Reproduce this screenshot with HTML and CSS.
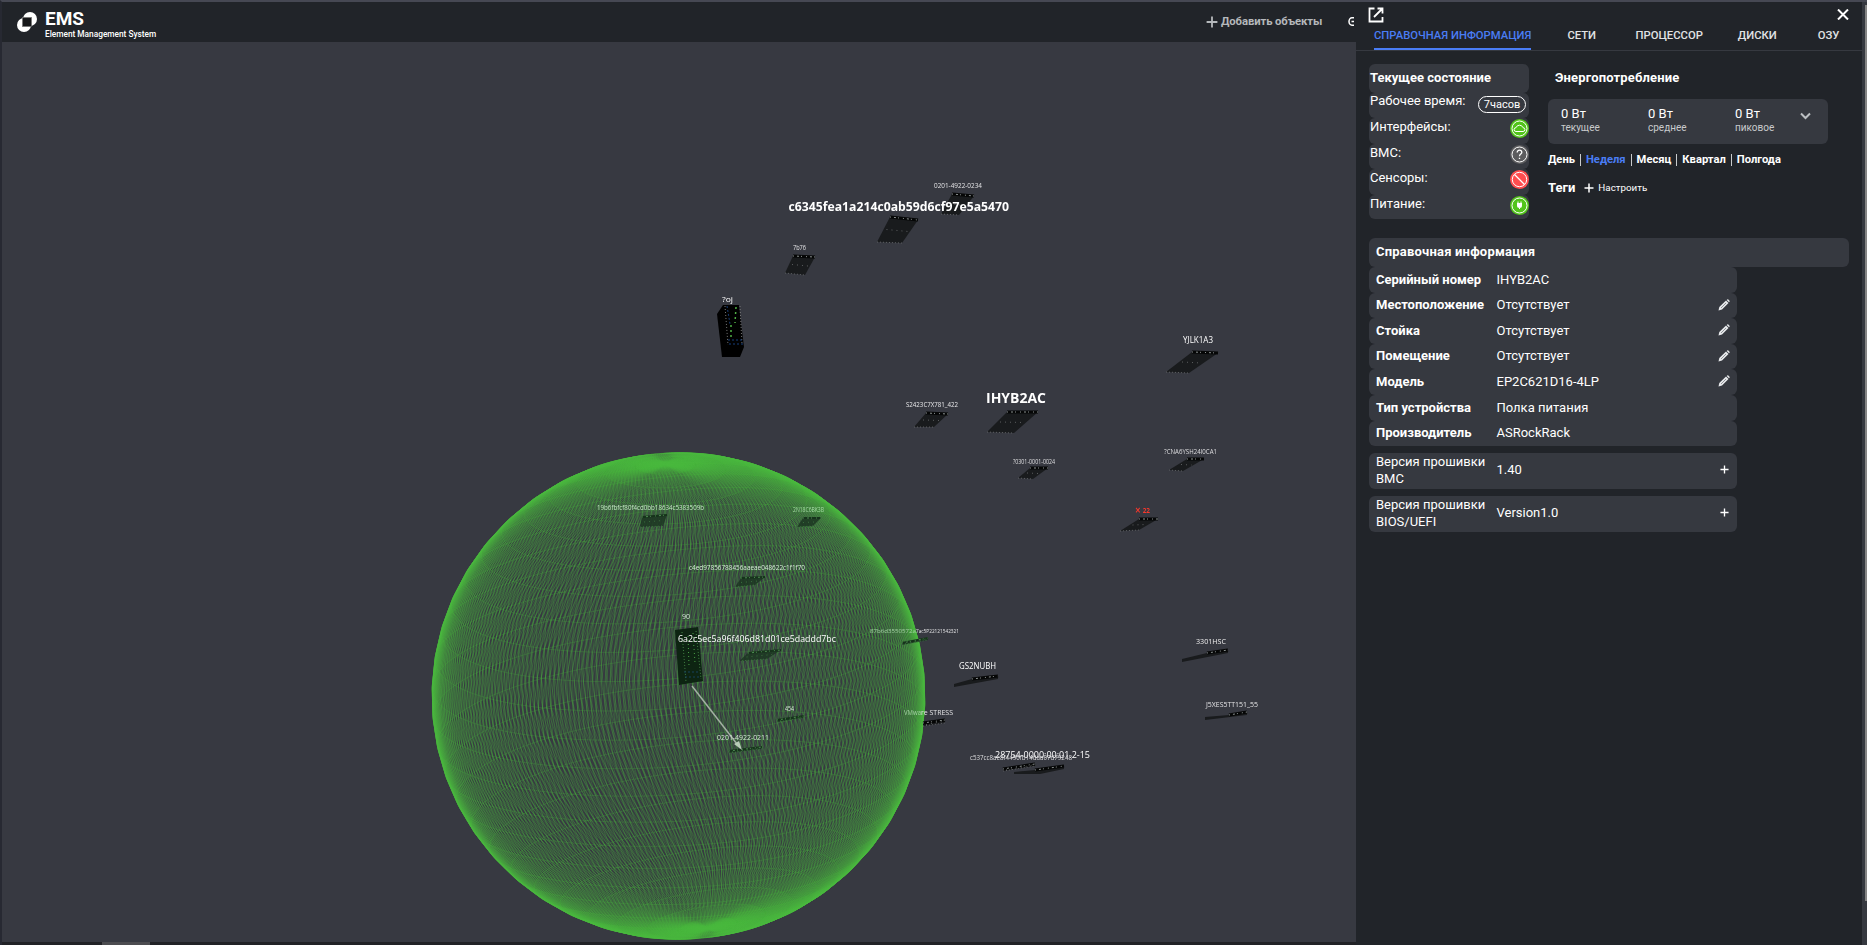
FILE: index.html
```html
<!DOCTYPE html>
<html lang="ru">
<head>
<meta charset="utf-8">
<title>EMS</title>
<link rel="stylesheet" href="styles.css">
</head>
<body>
<svg class="defs" width="0" height="0">
  <symbol id="pencil" viewBox="0 0 12 12"><path d="M.5 11.500l.8-3.400L8 1.500l2.500 2.500L4 10.600z" fill="#e8eaec"/><path d="M8.700 1l.6-.5c.3-.3.7-.3 1 0l1.200 1.200c.3.300.3.700 0 1l-.5.600z" fill="#e8eaec"/><path d="M3 9l5-5" stroke="#6b6f75" stroke-width=".7"/></symbol>
  <symbol id="plus" viewBox="0 0 10 10"><path d="M5 .5v9M.5 5h9" stroke="currentColor" stroke-width="1.500"/></symbol>
</svg>
<div class="app">
  <main class="main">
    <header class="header">
      <svg class="logo" width="20" height="20" viewBox="0 0 20 20"><circle cx="13" cy="7" r="7" fill="#fff"/><circle cx="7" cy="13" r="7" fill="#fff"/><rect x="5.500" y="5.500" width="9" height="9" fill="#17181a" stroke="#777" stroke-width=".8"/></svg>
      <div class="brand"><b class="brand-name">EMS</b><span class="brand-sub">Element Management System</span></div>
      <div class="add"><svg width="12" height="12"><use href="#plus"/></svg><span>Добавить объекты</span></div>
      <svg class="more" width="6" height="9" viewBox="0 0 6 9" fill="none" stroke="#fff" stroke-width="1.500"><path d="M6 .8H4a3 3.700 0 0 0 0 7.400h2M3.500 4.500H6"/></svg>
    </header>
    <div class="scene">
      <canvas id="sphere" class="sphere" width="1354" height="900"></canvas>
      <svg class="objects" id="objects" width="1354" height="900" viewBox="2 42 1354 900"></svg>
    </div>
    <footer class="hscroll"><i class="hthumb"></i></footer>
  </main>
  <aside class="panel">
    <div class="panel-top">
      <svg width="16" height="16" viewBox="0 0 16 16" fill="none" stroke="#fff" stroke-width="1.800"><path d="M6.500 1.500H1.500v13h13V10M9.500 1.500h5v5M14 2L6 10"/></svg>
      <svg class="close" width="12" height="11" viewBox="0 0 12 11" stroke="#fff" stroke-width="2"><path d="M1 .5l10 10M11 .5l-10 10"/></svg>
    </div>
    <nav class="tabs"><span class="tab active">СПРАВОЧНАЯ ИНФОРМАЦИЯ</span><span class="tab">СЕТИ</span><span class="tab">ПРОЦЕССОР</span><span class="tab">ДИСКИ</span><span class="tab">ОЗУ</span></nav>
    <div class="top">
      <section class="state">
        <h2 class="state-title">Текущее состояние</h2>
        <div class="srow first"><span>Рабочее время:</span><em class="pill">7часов</em></div>
        <div class="srow"><span>Интерфейсы:</span><svg width="19" height="19" viewBox="0 0 19 19"><circle cx="9.500" cy="9.500" r="9.500" fill="#52c41a"/><circle cx="9.500" cy="9.500" r="7.500" fill="none" stroke="#fff"/><path d="M6 12.500a1.900 1.900 0 0 1 0-3.800 3.700 3.700 0 0 1 7 0 1.900 1.900 0 0 1 0 3.800z" fill="none" stroke="#fff"/></svg></div>
        <div class="srow"><span>BMC:</span><svg width="19" height="19" viewBox="0 0 19 19"><circle cx="9.500" cy="9.500" r="9.500" fill="#5c5c5e"/><circle cx="9.500" cy="9.500" r="7.500" fill="none" stroke="#fff"/><path d="M7.200 7.500c0-3.200 4.800-3 4.600 0-.1 1.600-2.300 1.700-2.300 3.700M9.500 12.700v1.400" fill="none" stroke="#fff" stroke-width="1.300"/></svg></div>
        <div class="srow"><span>Сенсоры:</span><svg width="19" height="19" viewBox="0 0 19 19"><circle cx="9.500" cy="9.500" r="9.500" fill="#ff4d4f"/><circle cx="9.500" cy="9.500" r="7.200" fill="none" stroke="#fff"/><path d="M4.500 4.500l10 10" stroke="#fff" stroke-width="1.200"/></svg></div>
        <div class="srow last"><span>Питание:</span><svg width="19" height="19" viewBox="0 0 19 19"><circle cx="9.500" cy="9.500" r="9.500" fill="#52c41a"/><circle cx="9.500" cy="9.500" r="7.500" fill="none" stroke="#fff"/><path d="M7 7h5v2.500a2.500 2.500 0 0 1-5 0zM7.500 5.500h1V7h-1zM10.500 5.500h1V7h-1zM9 11h1v2H9z" fill="#fff"/></svg></div>
      </section>
      <section class="power">
        <h2 class="power-title">Энергопотребление</h2>
        <div class="meter">
          <div class="m"><span>0 Вт</span><small>текущее</small></div><div class="m"><span>0 Вт</span><small>среднее</small></div><div class="m"><span>0 Вт</span><small>пиковое</small></div>
          <svg class="chev" width="11" height="8" viewBox="0 0 11 8" fill="none" stroke="#bcbfc2" stroke-width="2"><path d="M1 1.500l4.500 4.500L10 1.500"/></svg>
        </div>
        <div class="periods"><b>День</b><i></i><b class="on">Неделя</b><i></i><b>Месяц</b><i></i><b>Квартал</b><i></i><b>Полгода</b></div>
        <div class="tags"><b>Теги</b><svg width="10" height="10"><use href="#plus"/></svg><span>Настроить</span></div>
      </section>
    </div>
    <section class="info">
      <h2 class="info-title">Справочная информация</h2>
      <div class="row"><b>Серийный номер</b><span>IHYB2AC</span></div>
      <div class="row"><b>Местоположение</b><span>Отсутствует</span><svg width="12" height="12"><use href="#pencil"/></svg></div>
      <div class="row"><b>Стойка</b><span>Отсутствует</span><svg width="12" height="12"><use href="#pencil"/></svg></div>
      <div class="row"><b>Помещение</b><span>Отсутствует</span><svg width="12" height="12"><use href="#pencil"/></svg></div>
      <div class="row"><b>Модель</b><span>EP2C621D16-4LP</span><svg width="12" height="12"><use href="#pencil"/></svg></div>
      <div class="row"><b>Тип устройства</b><span>Полка питания</span></div>
      <div class="row"><b>Производитель</b><span>ASRockRack</span></div>
      <div class="row fw"><p>Версия прошивки BMC</p><span>1.40</span><svg class="exp" width="9" height="9"><use href="#plus"/></svg></div>
      <div class="row fw"><p>Версия прошивки BIOS/UEFI</p><span>Version1.0</span><svg class="exp" width="9" height="9"><use href="#plus"/></svg></div>
    </section>
  </aside>
  <div class="vscroll"><i class="vthumb"></i></div>
</div>
<script src="scene.js"></script>
</body>
</html>
```
FILE: styles.css
```css
* { box-sizing: border-box; }
body { margin: 0; width: 1867px; height: 945px; overflow: hidden; background: #212429; color: #fff; font: 13px/17px Roboto, "Noto Sans", sans-serif; }
h2, p { margin: 0; font-size: 13px; line-height: 17px; }
.defs { position: absolute; }
.app { display: flex; height: 945px; border-top: 2px solid #464853; border-left: 2px solid #272932; }
.main { width: 1354px; flex: none; display: flex; flex-direction: column; }
.header { height: 40px; flex: none; display: flex; align-items: flex-start; background: #212429; overflow: hidden; white-space: nowrap; }
.logo { margin: 10px 0 0 15px; }
.brand { display: flex; flex-direction: column; margin: 8px 0 0 8px; width: 1161px; flex: none; }
.brand-name { font-size: 19px; line-height: 18px; }
.brand-sub { font-size: 8.300px; line-height: 10px; margin-top: 1px; font-weight: 500; }
.add { display: flex; gap: 3px; align-items: center; margin-top: 11px; color: #b5b8bb; font-weight: 700; font-size: 11.300px; width: 141px; letter-spacing: -.1px; flex: none; }
.more { margin: 15px 0 0 1px; flex: none; }
.scene { position: relative; height: 900px; background: #373941; overflow: hidden; }
.sphere, .objects { position: absolute; left: 0; top: 0; }
.objects text { font-family: "Open Sans", "Noto Sans", sans-serif; }
.hscroll { flex: 1; background: #212226; padding-left: 100px; }
.hthumb { display: block; width: 48px; height: 3px; background: #4c4c50; }
.panel { width: 506px; flex: none; background: #212429; }
.panel-top { height: 21px; display: flex; justify-content: space-between; padding: 5px 13px 0 12px; }
.close { margin-top: 2px; }
.tabs { height: 28px; display: flex; padding-left: 18px; border-bottom: 1px solid #363940; font-size: 11.250px; font-weight: 500; color: #e1e3e5; white-space: nowrap; }
.tab { height: 27px; line-height: 25px; margin-right: 36px; }
.tab:nth-child(2) { margin-right: 39.500px; }
.tab:nth-child(3) { margin-right: 35px; }
.tab:nth-child(4) { margin-right: 41px; }
.tab.active { color: #4a7df5; border-bottom: 2px solid #4a7df5; }
.top { display: flex; padding: 13px 0 0 13px; height: 187px; gap: 19px; }
.state { width: 160px; }
.state-title { height: 28.500px; background: #363940; border-radius: 6px; padding: 5px 1px; }
.srow { height: 25.500px; background: #363940; border-radius: 6px; display: flex; justify-content: space-between; padding-left: 1px; line-height: 18px; }
.srow.first { line-height: 16px; }
.srow.last { height: 24px; }
.srow svg { margin-top: 1px; flex: none; }
.pill { font-style: normal; font-size: 11px; line-height: 15px; height: 17px; width: 48px; border: 1px solid #fff; border-radius: 9px; text-align: center; margin: 3px 3px 0 0; }
.power-title { padding: 5px 0 0 7px; letter-spacing: .15px; }
.meter { display: flex; width: 280px; height: 45px; margin-top: 13px; border-radius: 6px; background: #363940; padding: 6px 0 0 13px; }
.m { width: 87px; display: flex; flex-direction: column; }
.m + .m + .m { width: 65px; }
.m small { font-size: 10px; line-height: 12px; color: #c8cacc; }
.chev { margin-top: 7px; }
.periods { display: flex; align-items: center; height: 17px; margin-top: 7px; font-size: 11.200px; gap: 5px; white-space: nowrap; }
.periods i { width: 1px; height: 12px; background: #c9cbcd; }
.periods .on { color: #4a7df5; }
.tags { display: flex; align-items: center; margin-top: 11px; gap: 4px; font-size: 9.800px; }
.tags b { font-size: 13px; margin-right: 5px; }
.info { padding-left: 13px; }
.info-title { width: 480px; height: 29px; border-radius: 6px; background: #363940; padding: 5px 7px; letter-spacing: .2px; }
.row { width: 368px; height: 25.600px; border-radius: 6px; background: #363940; padding: 0 7px 1.500px; display: flex; align-items: center; }
.row b, .row p { width: 120.500px; flex: none; white-space: nowrap; }
.row p { width: 115px; margin-right: 5.500px; white-space: normal; }
.row span { flex: 1; }
.fw { height: 36.300px; margin-top: 6.600px; padding-bottom: 2.500px; }
.exp { margin-right: 1px; }
.vscroll { width: 5px; background: #363940; padding-left: 3px; }
.vthumb { display: block; width: 2px; height: 896px; margin-top: 3px; background: #858585; }
```
FILE: scene.js
```js
// Wireframe coverage sphere, drawn in page coordinates.
const ctx = document.getElementById('sphere').getContext('2d');
ctx.translate(-2, -42);
const CX = 678.5, CY = 696, RX = 246.5, RY = 243.5;
const LAT = 26, LON = 300, tilt = 0.29, roll = 0.09;
function project(theta, phi) {
  const x = Math.sin(theta) * Math.cos(phi), y = Math.cos(theta), z = Math.sin(theta) * Math.sin(phi);
  const y1 = y * Math.cos(tilt) - z * Math.sin(tilt);
  const x2 = x * Math.cos(roll) - y1 * Math.sin(roll);
  const y2 = x * Math.sin(roll) + y1 * Math.cos(roll);
  const lean = 110 * y2 * y2 * (1 - x2 * x2 - y2 * y2);
  return [CX + x2 * RX + lean, CY - y2 * RY];
}
ctx.lineWidth = 0.8;
ctx.strokeStyle = 'rgba(74,184,62,0.34)';
for (let j = 0; j < LON; j++) {
  const a = j / LON * 2 * Math.PI, b = (j + 1) / LON * 2 * Math.PI;
  ctx.beginPath();
  for (let i = 0; i <= LAT; i++) ctx.lineTo(...project(i / LAT * Math.PI, a));
  ctx.stroke();
  ctx.beginPath();
  for (let i = 0; i < LAT; i++) {
    ctx.moveTo(...project(i / LAT * Math.PI, b));
    ctx.lineTo(...project((i + 1) / LAT * Math.PI, a));
  }
  ctx.stroke();
}
ctx.strokeStyle = 'rgba(74,184,62,0.26)';
ctx.lineWidth = 0.9;
for (let i = 1; i < LAT; i++) {
  ctx.beginPath();
  for (let j = 0; j <= LON; j++) ctx.lineTo(...project(i / LAT * Math.PI, j / LON * 2 * Math.PI));
  ctx.stroke();
}
// Dense rim where the mesh turns away from the camera.
const rim = ctx.createRadialGradient(CX, CY, 225, CX, CY, 246);
rim.addColorStop(0, 'rgba(74,184,62,0)');
rim.addColorStop(0.6, 'rgba(74,184,62,0.12)');
rim.addColorStop(1, 'rgba(74,184,62,0.6)');
ctx.fillStyle = rim;
ctx.beginPath();
ctx.ellipse(CX, CY, RX, RY, 0, 0, 2 * Math.PI);
ctx.fill();

// Devices: outline, back edge (dark rim with specks) and body colour.
const D = '#191b1d', G = '#1c3622';
const boards = [
  ['952,194 974,196 959,215 941,214', D], ['890,217 918,220 902,243 877,242', D],
  ['793,256 815,257 805,275 785,273', D], ['1192,352 1218,353 1189,373 1166,372', D],
  ['1007,412 1038,412 1014,433 987,432', D], ['926,413 948,414 934,427 914,427', D],
  ['1030,468 1048,468 1033,479 1018,478', D], ['1187,459 1204,459 1183,471 1169,470', D],
  ['1139,519 1158,519 1139,530 1120,531', D], ['642,517 667,515 663,526 640,527', G],
  ['803,518 821,518 813,526 797,527', G], ['741,578 765,577 755,585 735,587', G],
  ['748,653 781,650 767,659 739,661', G], ['777,720 804,716 803,718 777,722', G],
  ['729,751 762,747 761,749 729,753', G], ['902,643 928,638 928,640 902,645', G],
  ['972,679 998,676 998,679 954,687 954,684', D], ['923,723 945,720 945,723 923,726', D],
  ['1207,653 1228,650 1228,653 1182,662 1182,659', D], ['1229,715 1247,712 1247,715 1205,720 1205,717', D],
  ['1035,770 1064,766 1064,769 1040,774 1014,774 1014,772', D], ['1003,769 1035,764 1035,766 1003,771', D]
];
let out = '';
for (const [pts, fill] of boards) {
  const p = pts.split(' ');
  const edge = `x1="${p[0].split(',')[0]}" y1="${p[0].split(',')[1]}" x2="${p[1].split(',')[0]}" y2="${p[1].split(',')[1]}"`;
  const green = fill === G;
  out += `<polygon points="${pts}" fill="${fill}" opacity="${green ? .85 : 1}"/><line ${edge} stroke="${green ? '#16331b' : '#050606'}" stroke-width="${green ? 2 : 3}"/><line ${edge} stroke="${green ? '#4c8a50' : '#8b9190'}" stroke-width="1" stroke-dasharray="1 3 2 2 1 4"/>`;
  if (p.length === 4) {
    const [a, b, c, d] = p.map(q => q.split(',').map(Number));
    const s = green ? '#3f7a43' : '#6c6f70';
    out += `<line x1="${d[0]}" y1="${d[1]}" x2="${c[0]}" y2="${c[1]}" stroke="${s}" stroke-width=".8" stroke-dasharray="1 2"/>`;
    out += `<line x1="${(a[0] + d[0]) / 2 + 3}" y1="${(a[1] + d[1]) / 2}" x2="${(b[0] + c[0]) / 2 - 2}" y2="${(b[1] + c[1]) / 2}" stroke="${s}" stroke-width=".8" stroke-dasharray="1 4"/>`;
  }
}
// Two rack servers
out += '<polygon points="723,305 739,305 744,347 740,357 722,357 717,314" fill="#000"/><path d="M725 306l3 39M740 306l2 38" stroke="#777" stroke-dasharray="1 2"/><path d="M736 307l-1 16M731 325l0 12" stroke="#4fae45" stroke-width="1.500" stroke-dasharray="2 3"/><path d="M727 306l3 18M728 340h14M729 344h14" stroke="#173e7a" stroke-dasharray="2 2"/>';
out += '<polygon points="675,630 698,627 703,681 679,685" fill="#0d2412"/><path d="M682 632l4 50M696 631l5 48" stroke="#428344" stroke-dasharray="1 2"/><path d="M688 636l1 30M693 633l2 30" stroke="#4ca749" stroke-dasharray="1 3"/><path d="M684 672h16M685 677h16" stroke="#17415c" stroke-dasharray="2 2"/>';
// Link arrow
out += '<path d="M692 686l45 58" stroke="#a3b0a3" stroke-width="1.500"/><path d="M734 744l5-3 3 9z" fill="#b8ccb7"/>';
// Labels: text, left, width, baseline, size, colour, weight
const labels = [
  ['0201-4922-0234', 934, 48, 188, 6.500, '#e3e3e5'], ['c6345fea1a214c0ab59d6cf97e5a5470', 788.500, 220.500, 210.500, 12.500, '#fff', 700],
  ['7b76', 793, 13, 250, 6.500, '#e3e3e5'], ['?oj', 722, 11, 302, 8, '#fff'],
  ['YJLK1A3', 1183, 30, 343, 8.500, '#fff'], ['IHYB2AC', 986, 60, 403, 14, '#fff', 700],
  ['S2423C7X781_422', 906, 52, 407, 6.800, '#e8e8ea'], ['?0301-0001-0024', 1013, 42, 463.500, 6.300, '#dedee0'],
  ['?CNA6YSH24I0CA1', 1164, 53, 453.500, 6.300, '#dedee0'], ['✕ 22', 1135, 15, 513, 7.500, '#f5382c', 700],
  ['19b6fbfcf80f4cd0bb18634c5383509b', 597, 107, 510, 6.800, '#c3e6c3'], ['2N18C6BK3B', 793, 31, 512, 6.300, '#a5dba5'],
  ['c4ed97856788456aaeae048622c1f1f70', 689, 116, 570, 6.800, '#d6ead7'], ['90', 682, 8, 619, 7, '#d5e6d6'],
  ['6a2c5ec5a96f406d81d01ce5daddd7bc', 678, 158, 642, 9.500, '#fff'], ['454', 785, 9, 711, 6.500, '#dcebdc'],
  ['0201-4922-0211', 717, 52, 740, 6.800, '#d5e6d6'], ['87b6d3550572a', 870, 46, 633, 6, '#a5d3a5'],
  ['7ac5P22121542321', 916, 43, 633, 6, '#e3e3e5'], ['GS2NUBH', 959, 37, 668.500, 8.500, '#fff'],
  ['VMwa', 904, 17, 715, 7, '#a5d3a5'], ['re STRESS', 921, 32, 715, 7, '#e3e3e5'],
  ['3301HSC', 1196, 30, 644, 7.500, '#eee'], ['J5XES5TT151_55', 1206, 52, 706.500, 6.800, '#e3e3e5'],
  ['28754-0000:00:01.2-15', 995, 95, 758, 9.500, '#fff'], ['c537cc8ae8f4490fb14daa07d79248', 970, 102, 759.500, 6.500, '#dedee0']
];
for (const [t, x, w, y, s, c, b = 400] of labels)
  out += `<text x="${x}" y="${y}" textLength="${w}" lengthAdjust="spacingAndGlyphs" font-size="${s}" font-weight="${b}" fill="${c}">${t}</text>`;
document.getElementById('objects').innerHTML = out;
```
